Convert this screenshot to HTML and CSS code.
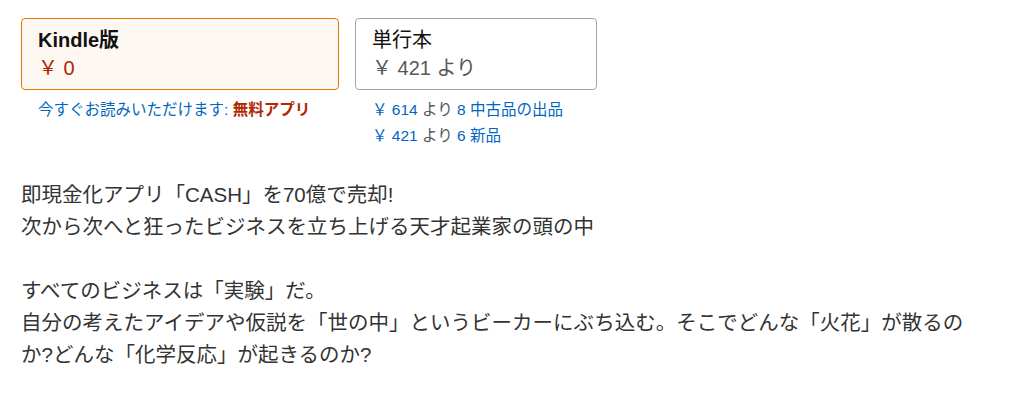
FILE: index.html
```
<!DOCTYPE html>
<html lang="ja">
<head>
  <meta charset="UTF-8">
  <title>即現金化アプリ「CASH」</title>
  <link rel="stylesheet" href="styles.css">
</head>
<body>
  <div class="page">
    <!-- Formats -->
    <div class="formats">
      <div class="format">
        <div class="swatch selected">
          <div class="swatch-title">Kindle版</div>
          <div class="swatch-price red">￥ 0</div>
        </div>
        <div class="extra">
          <a href="#" class="link">今すぐお読みいただけます: </a><a href="#" class="free">無料アプリ</a>
        </div>
      </div>
      <div class="format">
        <div class="swatch">
          <div class="swatch-title normal">単行本</div>
          <div class="swatch-price gray">￥ 421 より</div>
        </div>
        <div class="extra">
          <div><a href="#" class="link">￥ 614</a> <span class="gray">より</span> <a href="#" class="link">8 中古品の出品</a></div>
          <div><a href="#" class="link">￥ 421</a> <span class="gray">より</span> <a href="#" class="link">6 新品</a></div>
        </div>
      </div>
    </div>

    <!-- Description -->
    <div class="description">
      <p>即現金化アプリ「CASH」を70億で売却!<br>次から次へと狂ったビジネスを立ち上げる天才起業家の頭の中</p>
      <p>すべてのビジネスは「実験」だ。<br>自分の考えたアイデアや仮説を「世の中」というビーカーにぶち込む。そこでどんな「火花」が散るのか?どんな「化学反応」が起きるのか?</p>
    </div>
  </div>
</body>
</html>
```
FILE: styles.css
```
body {
  margin: 0;
  background-color: #fff;
  font-family: "Liberation Sans", "Noto Sans CJK JP", sans-serif;
  color: #111;
}
.page {
  padding: 18px 21px;
}
.formats {
  display: flex;
  gap: 16px;
  align-items: flex-start;
}
.swatch {
  border: 1px solid #a6a6a6;
  border-radius: 4px;
  padding: 7px 16px;
  height: 56px;
  width: 208px;
}
.swatch.selected {
  border-color: #e77600;
  background-color: #fef8f2;
  width: 284px;
}
.swatch-title {
  font-size: 20px;
  line-height: 28px;
  font-weight: bold;
  color: #111;
}
.swatch-title.normal {
  font-weight: normal;
}
.swatch-price {
  font-size: 20px;
  line-height: 28px;
}
.red {
  color: #b12704;
}
.gray {
  color: #565959;
}
.extra {
  margin-top: 7px;
  padding-left: 17px;
  font-size: 15.5px;
  line-height: 26px;
}
.extra a {
  text-decoration: none;
}
.link {
  color: #0066c0;
}
.free {
  color: #b12704;
  font-weight: bold;
}
.description {
  margin-top: 30px;
  width: 955px;
  font-size: 20.5px;
  line-height: 32px;
  color: #333;
}
.description p {
  margin: 0 0 32px;
}
```
